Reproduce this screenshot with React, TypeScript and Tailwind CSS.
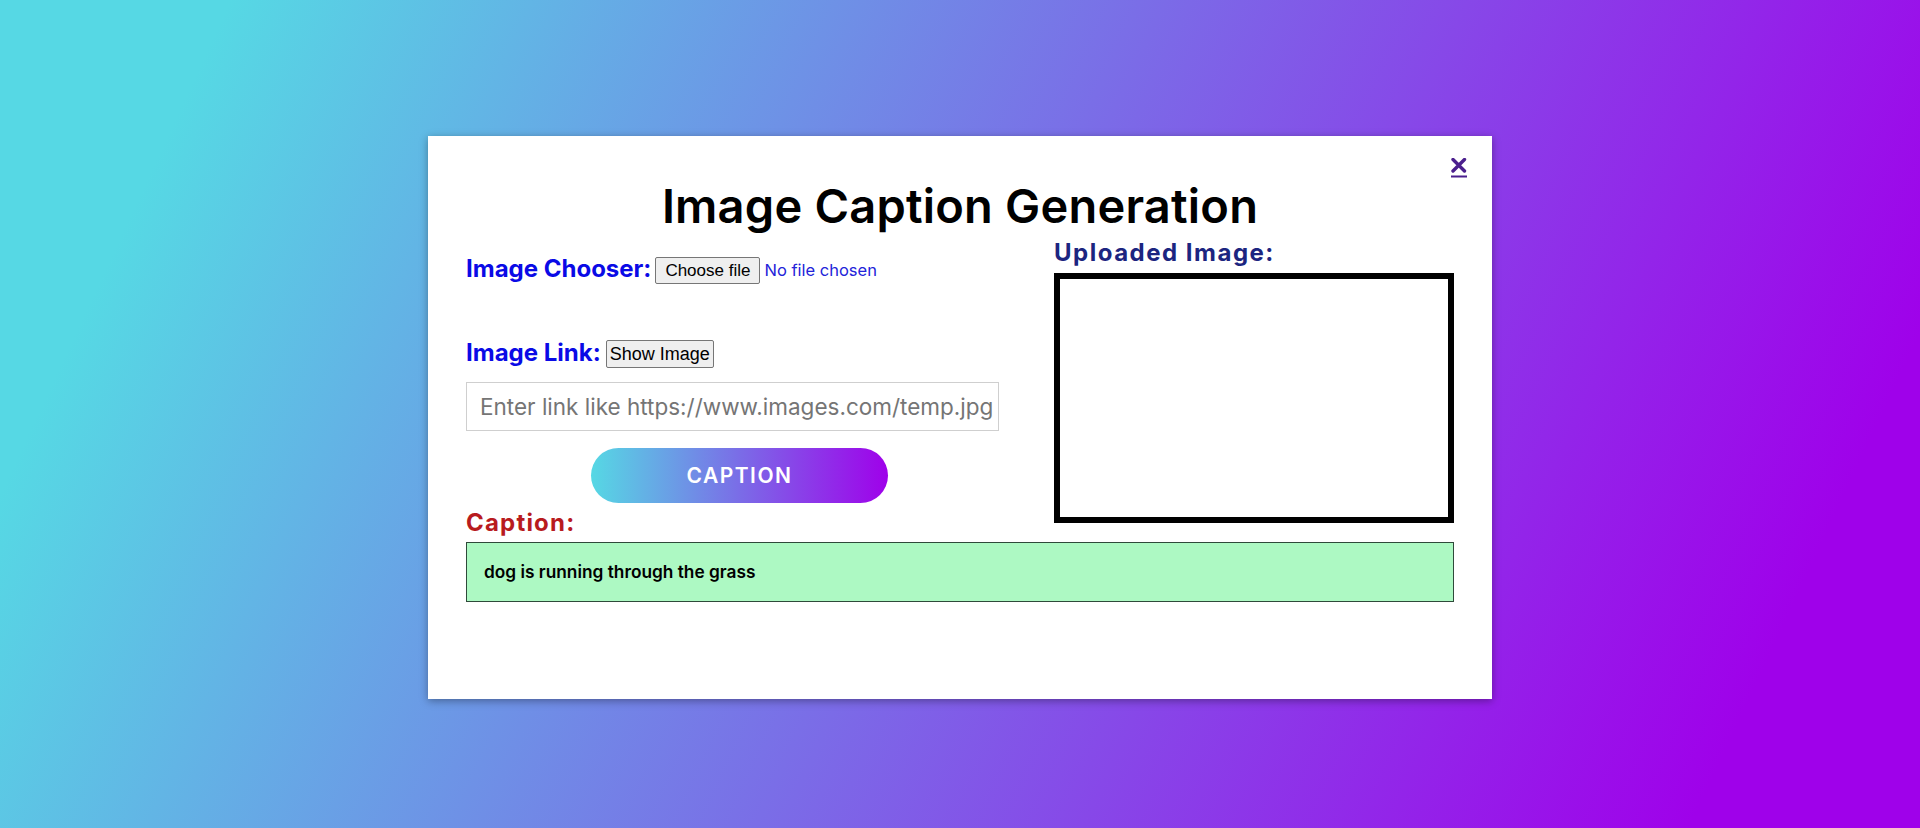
const font = "font-['Inter','Noto_Sans',sans-serif]";

function CloseIcon() {
  return (
    <svg width="16" height="20" viewBox="0 0 16 20" className="block">
      <path d="M2 1.5 L13.5 13 M13.5 1.5 L2 13" stroke="#4b1f8d" strokeWidth="3.4" strokeLinecap="round" />
      <rect x="0" y="17.5" width="16" height="2" fill="#4b1f8d" />
    </svg>
  );
}

export default function App() {
  return (
    <div className={`${font} flex min-h-screen w-full justify-center bg-[linear-gradient(115deg,#56d8e4_10%,#9f01ea_90%)] pt-[136px]`}>
      <div className="relative h-fit w-[1064px] bg-white px-[38px] pb-[97px] pt-[46px] shadow-[0_2px_8px_rgba(0,0,0,0.35)]">
        <a href="#" className="absolute right-[25px] top-[22px]">
          <CloseIcon />
        </a>

        <h1 className="h-[46px] text-center text-[47px] font-semibold leading-none tracking-[0.2px] text-black">
          Image Caption Generation
        </h1>

        <div className="flex items-start justify-between">
          {/* left column */}
          <div className="mt-[27px] w-[533px]">
            <div className="flex h-[28px] items-center">
              <span className="text-[24px] font-bold leading-none text-[#0a0ae6]">Image Chooser:</span>
              <button className="ml-[4px] mt-[3px] h-[27px] rounded-[2px] border border-[#767676] bg-[#efefef] px-[9px] font-['Liberation_Sans',Arial,sans-serif] text-[17px] leading-none text-black">
                Choose file
              </button>
              <span className="ml-[4px] mt-[3px] text-[16.5px] leading-none text-[#2323d9]">No file chosen</span>
            </div>

            <div className="mt-[56px] flex h-[28px] items-center">
              <span className="text-[24px] font-bold leading-none text-[#0a0ae6]">Image Link:</span>
              <button className="ml-[5px] mt-[2px] h-[28px] rounded-[2px] border border-[#767676] bg-[#efefef] px-[3px] font-['Liberation_Sans',Arial,sans-serif] text-[18px] leading-none text-black">
                Show Image
              </button>
            </div>

            <input
              type="text"
              placeholder="Enter link like https://www.images.com/temp.jpg"
              className="mt-[15px] block h-[49px] w-[533px] border border-[#cfcfcf] bg-white pl-[13px] text-[22.5px] text-black outline-none placeholder:text-[#757575]"
            />

            <button className="ml-[125px] mt-[17px] flex h-[55px] w-[297px] items-center justify-center rounded-full bg-[linear-gradient(to_right,#56d8e4,#9f01ea)] text-[21px] font-semibold tracking-[1.5px] text-white">
              CAPTION
            </button>

            <div className="mt-[8px] text-[24px] font-bold leading-none tracking-[1.2px] text-[#b81b1e]">Caption:</div>
          </div>

          {/* right column */}
          <div className="mt-[13px] w-[400px]">
            <div className="text-[24px] font-bold leading-none tracking-[1.5px] text-[#1c2580]">Uploaded Image:</div>
            <div className="mt-[8px] h-[250px] w-[400px] border-[6px] border-black bg-white" />
          </div>
        </div>

        <div className="mt-[7px] flex h-[60px] items-center border border-[#2f4a3a] bg-[#adf9c3] pl-[17px] text-[17.3px] font-semibold text-black">
          dog is running through the grass
        </div>
      </div>
    </div>
  );
}
